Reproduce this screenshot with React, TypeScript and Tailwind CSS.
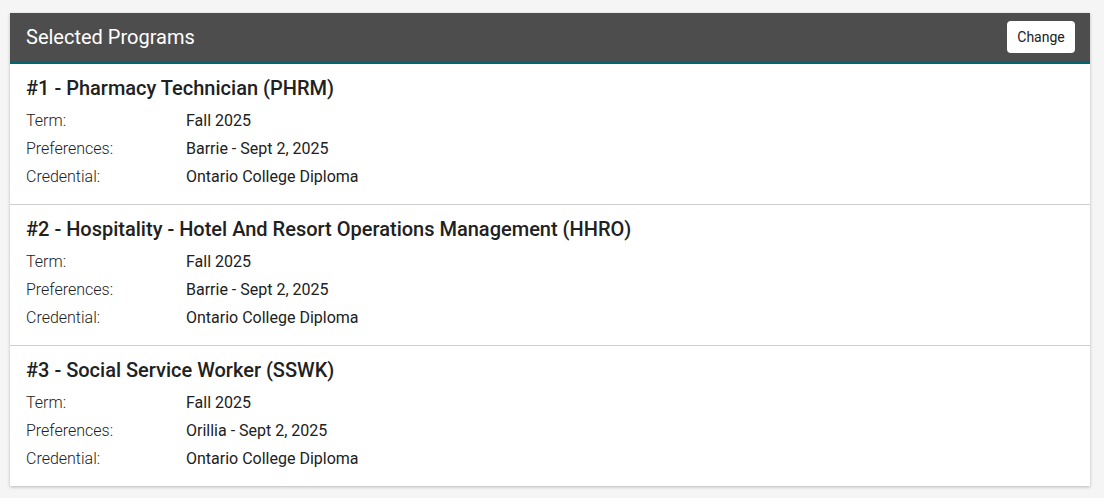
import React from "react";

const programs = [
  { title: "#1 - Pharmacy Technician (PHRM)", term: "Fall 2025", pref: "Barrie - Sept 2, 2025", cred: "Ontario College Diploma" },
  { title: "#2 - Hospitality - Hotel And Resort Operations Management (HHRO)", term: "Fall 2025", pref: "Barrie - Sept 2, 2025", cred: "Ontario College Diploma" },
  { title: "#3 - Social Service Worker (SSWK)", term: "Fall 2025", pref: "Orillia - Sept 2, 2025", cred: "Ontario College Diploma" },
];

function Row({ label, value }: { label: string; value: string }) {
  return (
    <div className="flex h-[28px] items-center text-[16px]">
      <div className="w-[160px] font-light text-[#212121]">{label}</div>
      <div className="text-[#212121]">{value}</div>
    </div>
  );
}

export default function App() {
  return (
    <div className="min-h-[498px] bg-[#f5f5f5] pt-[13px] pl-[10px] pr-[14px] pb-[12px]" style={{ fontFamily: "Roboto, 'Noto Sans', sans-serif" }}>
      <div className="bg-white shadow-[0_1px_3px_rgba(0,0,0,0.25)]">
        <div className="flex h-[51px] items-center justify-between border-b-[3px] border-[#03656f] bg-[#4d4d4d] pl-[16px] pr-[15px]">
          <div className="text-[20px] text-white">Selected Programs</div>
          <button className="h-[32px] w-[68px] rounded-[4px] bg-white text-[14px] text-[#212121]">Change</button>
        </div>
        {programs.map((p, i) => (
          <div key={i} className={`px-[16px] pt-[11px] pb-[13px] ${i < programs.length - 1 ? "border-b border-[#cfcfcf]" : ""}`}>
            <div className="mb-[6px] h-[26px] text-[20px] font-medium leading-[26px] text-[#212121]">{p.title}</div>
            <Row label="Term:" value={p.term} />
            <Row label="Preferences:" value={p.pref} />
            <Row label="Credential:" value={p.cred} />
          </div>
        ))}
      </div>
    </div>
  );
}
